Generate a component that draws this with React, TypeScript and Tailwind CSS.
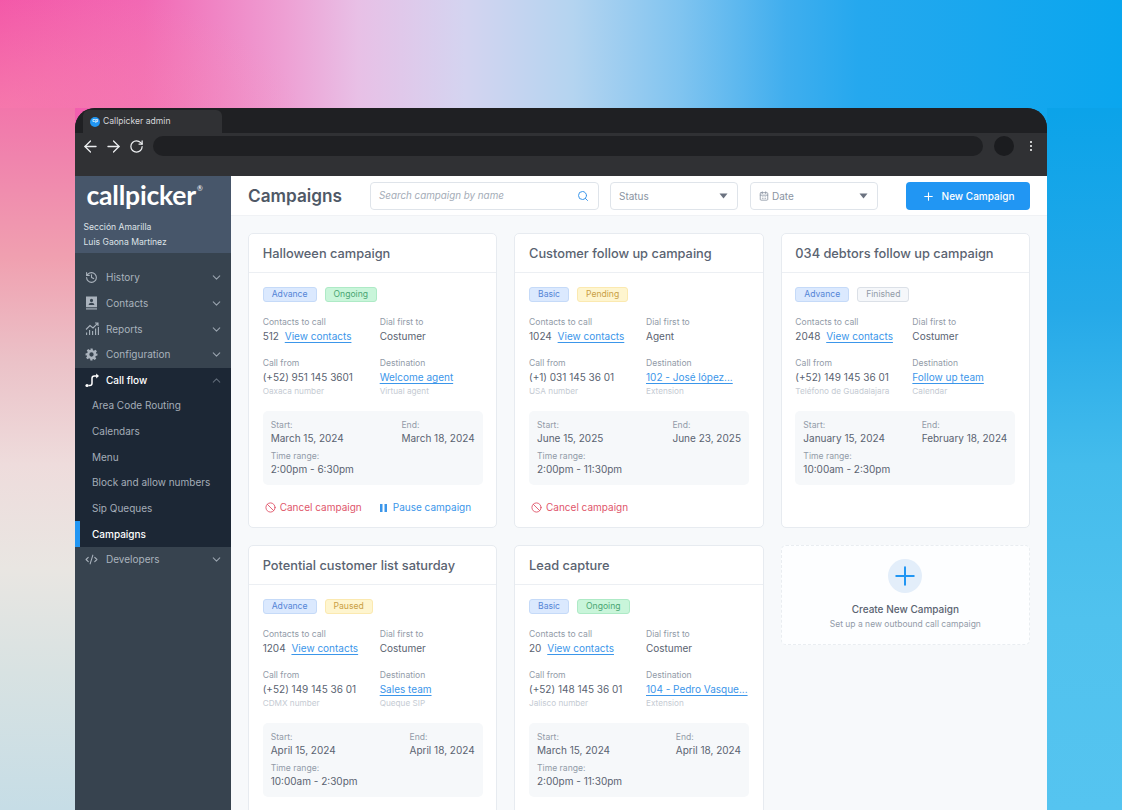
import React from "react";
import { ArrowLeft, ArrowRight, RotateCw, ChevronDown, ChevronUp, History, CodeXml, Search, Plus, Ban, CalendarDays } from "lucide-react";

const ContactsIcon = () => (
  <svg width="13" height="14" viewBox="0 0 13 14" fill="currentColor"><path fillRule="evenodd" d="M1 .5h11v10.800H1zM6.500 2.800a1.600 1.600 0 1 0 0 3.200 1.600 1.600 0 0 0 0-3.200M3.600 9h5.800c-.2-1.400-1.400-2.200-2.900-2.200S3.800 7.600 3.600 9" /><path d="M1 12.300h11v1.200H1z" /></svg>
);
const ReportsIcon = () => (
  <svg width="15" height="14" viewBox="0 0 15 14" fill="none" stroke="currentColor" strokeWidth="1.1"><path d="M1 7.500 5 3.600l3 2.400 4.600-4.600M10 1h3v3M1.600 13v-2.600M4.600 13V8M7.600 13V9M10.600 13V6.600M13.400 13V5" /></svg>
);
const GearIcon = () => (
  <svg width="13" height="13" viewBox="0 0 24 24" fill="currentColor"><path fillRule="evenodd" d="M10 1h4l.6 3.200 1.900.8 2.700-1.800 2.800 2.800-1.800 2.700.8 1.900L23 10v4l-3.200.6-.8 1.900 1.800 2.700-2.800 2.800-2.700-1.800-1.900.8L14 23h-4l-.6-3.200-1.900-.8-2.700 1.800-2.800-2.800 1.800-2.700-.8-1.900L1 14v-4l3.200-.6.8-1.900L3.200 4.800 6 2l2.700 1.800 1.900-.8zM12 8a4 4 0 1 0 0 8 4 4 0 0 0 0-8" /></svg>
);
const FlowIcon = () => (
  <svg width="15" height="15" viewBox="0 0 15 15" fill="none" stroke="currentColor" strokeWidth="1.500"><path d="M3.500 12.500h1.200c1.600 0 2.300-.9 2.300-2.300V5.300C7 3.800 7.800 3 9.300 3H12" /><path d="M11.200.6 14 3l-2.800 2.400z" fill="currentColor" stroke="none" /><circle cx="2" cy="12.500" r="1.600" fill="currentColor" stroke="none" /></svg>
);

const NavItem = ({ icon, label, open }: { icon: React.ReactNode; label: string; open?: boolean }) => (
  <div className={`flex h-[25.64px] items-center pl-[10px] pr-[8px] ${open ? "font-medium text-white" : "text-[#aab3bd]"}`}>
    <span className="flex w-[21px] shrink-0 items-center">{icon}</span>
    <span className="flex-1 text-[10px]">{label}</span>
    {open ? <ChevronUp size={13} className="text-[#5f6a78]" /> : <ChevronDown size={13} className="text-[#98a2ad]" />}
  </div>
);

const SubItem = ({ label, active }: { label: string; active?: boolean }) => (
  <div className={`flex h-[25.64px] items-center text-[10px] ${active ? "border-l-[5px] border-[#2196f3] pl-[12px] font-medium text-white" : "pl-[17px] text-[#a4adb8]"}`}>{label}</div>
);

const badgeStyles: Record<string, string> = {
  Advance: "bg-[#dbe9fe] border-[#c5daf8] text-[#5585d6]",
  Basic: "bg-[#dbe9fe] border-[#c5daf8] text-[#5585d6]",
  Ongoing: "bg-[#c9f5da] border-[#aeeac6] text-[#4aa572]",
  Pending: "bg-[#fef5cf] border-[#fbe9b0] text-[#c9a045]",
  Paused: "bg-[#fef5cf] border-[#fbe9b0] text-[#c9a045]",
  Finished: "bg-[#f5f7fa] border-[#dbe0e7] text-[#929ba8]",
};

const Badge = ({ label }: { label: string }) => (
  <span className={`flex h-[15px] items-center rounded-[3px] border px-[8px] text-[8.6px] ${badgeStyles[label]}`}>{label}</span>
);

type C = {
  title: string; level: string; status: string; contacts: string; dial: string; from: string; fromNote: string;
  dest: string; destNote: string; start: string; end: string; range: string; cancel?: boolean; pause?: boolean;
};

const labelCls = "text-[8.6px] leading-[14px] text-[#929ba8]";
const valueCls = "text-[10px] leading-[14px] text-[#5a6371]";

const Card = ({ c }: { c: C }) => (
  <div className="flex h-[295px] flex-col rounded-[5px] border border-[#e7ebf0] bg-white">
    <div className="flex h-[39px] shrink-0 items-center border-b border-[#eceff3] px-[13.7px] pt-[1px] text-[12.8px] font-medium text-[#5a6371]">{c.title}</div>
    <div className="flex flex-1 flex-col px-[13.7px] pt-[14px]">
      <div className="flex gap-[8px]"><Badge label={c.level} /><Badge label={c.status} /></div>
      <div className="mt-[13px] grid grid-cols-[117px_1fr]">
        <div>
          <div className={labelCls}>Contacts to call</div>
          <div className={valueCls}>{c.contacts} <span className="ml-[3px] text-[#3b96ea] underline underline-offset-2">View contacts</span></div>
        </div>
        <div>
          <div className={labelCls}>Dial first to</div>
          <div className={valueCls}>{c.dial}</div>
        </div>
      </div>
      <div className="mt-[13px] grid grid-cols-[117px_1fr]">
        <div>
          <div className={labelCls}>Call from</div>
          <div className={valueCls}>{c.from}</div>
          <div className="text-[8.2px] leading-[14px] text-[#c5cbd3]">{c.fromNote}</div>
        </div>
        <div className="min-w-0">
          <div className={labelCls}>Destination</div>
          <div className="whitespace-nowrap text-[10px] leading-[14px] text-[#3b96ea] underline underline-offset-2">{c.dest}</div>
          <div className="text-[8.2px] leading-[14px] text-[#c5cbd3]">{c.destNote}</div>
        </div>
      </div>
      <div className="mt-[13px] flex h-[74px] shrink-0 justify-between rounded-[5px] bg-[#f6f8fa] px-[8px] pt-[8px]">
        <div>
          <div className="text-[8.6px] leading-[13px] text-[#929ba8]">Start:</div>
          <div className="text-[10px] leading-[13px] text-[#5a6371]">{c.start}</div>
          <div className="mt-[5px] text-[8.6px] leading-[13px] text-[#929ba8]">Time range:</div>
          <div className="text-[10px] leading-[13px] text-[#5a6371]">{c.range}</div>
        </div>
        <div>
          <div className="text-[8.6px] leading-[13px] text-[#929ba8]">End:</div>
          <div className="text-[10px] leading-[13px] text-[#5a6371]">{c.end}</div>
        </div>
      </div>
      <div className="mt-[15px] flex items-center gap-[18px] pl-[2px] text-[10px]">
        {c.cancel && <span className="flex items-center gap-[4px] text-[#e0566b]"><Ban size={11} />Cancel campaign</span>}
        {c.pause && (
          <span className="flex items-center gap-[6px] text-[#3b96ea]">
            <svg width="7" height="8" viewBox="0 0 7 8" fill="currentColor"><rect width="2.500" height="8" /><rect x="4.500" width="2.500" height="8" /></svg>
            Pause campaign
          </span>
        )}
      </div>
    </div>
  </div>
);

const cards: C[] = [
  { title: "Halloween campaign", level: "Advance", status: "Ongoing", contacts: "512", dial: "Costumer", from: "(+52) 951 145 3601", fromNote: "Oaxaca number", dest: "Welcome agent", destNote: "Virtual agent", start: "March 15, 2024", end: "March 18, 2024", range: "2:00pm - 6:30pm", cancel: true, pause: true },
  { title: "Customer follow up campaing", level: "Basic", status: "Pending", contacts: "1024", dial: "Agent", from: "(+1) 031 145 36 01", fromNote: "USA number", dest: "102 - José lópez...", destNote: "Extension", start: "June 15, 2025", end: "June 23, 2025", range: "2:00pm - 11:30pm", cancel: true },
  { title: "034 debtors follow up campaign", level: "Advance", status: "Finished", contacts: "2048", dial: "Costumer", from: "(+52) 149 145 36 01", fromNote: "Teléfono de Guadalajara", dest: "Follow up team", destNote: "Calendar", start: "January 15, 2024", end: "February 18, 2024", range: "10:00am - 2:30pm" },
  { title: "Potential customer list saturday", level: "Advance", status: "Paused", contacts: "1204", dial: "Costumer", from: "(+52) 149 145 36 01", fromNote: "CDMX number", dest: "Sales team", destNote: "Queque SIP", start: "April 15, 2024", end: "April 18, 2024", range: "10:00am - 2:30pm" },
  { title: "Lead capture", level: "Basic", status: "Ongoing", contacts: "20", dial: "Costumer", from: "(+52) 148 145 36 01", fromNote: "Jalisco number", dest: "104 - Pedro Vasque...", destNote: "Extension", start: "March 15, 2024", end: "April 18, 2024", range: "2:00pm - 11:30pm" },
];

const Caret = () => <svg width="9" height="6" viewBox="0 0 9 6" fill="#6b7280"><path d="M0.500 0.500h8L4.500 5.500z" /></svg>;

export default function App() {
  return (
    <div className="h-[810px] w-[1122px] overflow-hidden px-[75px] pt-[108px] font-['Inter',sans-serif] [background:radial-gradient(ellipse_300px_130px_at_0px_110px,rgba(248,150,175,0.55)_0%,rgba(248,150,175,0)_100%)_0_0/100%_108px_no-repeat,linear-gradient(180deg,#f276ab_0px,#f083ad_47px,#f0a0b0_150px,#ebc2c8_254px,#eedcdc_357px,#e9e6e2_460px,#d8e2e2_564px,#c6dde6_702px)_0_108px/75px_702px_no-repeat,linear-gradient(180deg,#0ba3e9_0px,#25a9e8_202px,#44bcec_357px,#50c2ee_512px,#55c4f0_702px)_1047px_108px/75px_702px_no-repeat,linear-gradient(90deg,#f353a8_0px,#f268b4_143px,#eea0d4_286px,#e8c0e6_358px,#d4d4f0_465px,#b4d4f0_573px,#80c4f0_680px,#40aeee_786px,#25a8ee_858px,#0aa6ee_1122px)]">
      <div className="flex h-[702px] flex-col overflow-hidden rounded-t-[20px] bg-[#303134]">
        <div className="flex h-[25px] shrink-0 items-end bg-[#1f2023] pl-[8px]">
          <div className="flex h-[23px] w-[139px] items-center gap-[3px] rounded-t-[6px] bg-[#303134] pl-[7px] text-[8.6px] text-[#d5d7da]">
            <span className="flex h-[10px] w-[10px] items-center justify-center rounded-full bg-[#2196f3] text-[4.5px] font-bold text-white">cp</span>
            Callpicker admin
          </div>
        </div>
        <div className="flex h-[43px] shrink-0 items-start pl-[6px] pr-[15px] pt-[3px]">
          <div className="flex h-[20px] items-center gap-[2.500px] text-[#eceef0]">
            <ArrowLeft size={19} strokeWidth={1.6} />
            <ArrowRight size={19} strokeWidth={1.6} className="ml-[1px]" />
            <span className="ml-[1px] flex w-[20px] justify-center"><RotateCw size={15} strokeWidth={2} /></span>
          </div>
          <div className="ml-[7px] h-[20px] flex-1 rounded-full bg-[#1f2023]" />
          <div className="ml-[11px] h-[20px] w-[20px] rounded-full bg-[#1b1c1f]" />
          <div className="ml-[15px] flex h-[20px] w-[3px] flex-col items-center justify-center gap-[2px]">
            <i className="h-[2px] w-[2px] rounded-full bg-white" /><i className="h-[2px] w-[2px] rounded-full bg-white" /><i className="h-[2px] w-[2px] rounded-full bg-white" />
          </div>
        </div>
        <div className="flex min-h-0 flex-1">
          <aside className="flex w-[156px] shrink-0 flex-col bg-[#37434f]">
            <div className="h-[77px] shrink-0 bg-[#47566a] pl-[8.500px] pt-[3px] text-[#dfe3e8]">
              <div className="flex h-[36px] items-start pl-[3px] font-['Lato',sans-serif] text-[26.500px] font-bold leading-[32px] tracking-[-0.2px] text-white">
                callpicker<span className="ml-[1px] mt-[-7px] text-[7px] font-normal">®</span>
              </div>
              <div className="mt-[5px] text-[8.600px] leading-[14.500px]">Sección Amarilla</div>
              <div className="text-[8.600px] leading-[14.500px]">Luis Gaona Martínez</div>
            </div>
            <div className="pt-[12px]">
              <NavItem icon={<History size={13} />} label="History" />
              <NavItem icon={<ContactsIcon />} label="Contacts" />
              <NavItem icon={<ReportsIcon />} label="Reports" />
              <NavItem icon={<GearIcon />} label="Configuration" />
              <div className="bg-[#1c2735]">
                <NavItem icon={<FlowIcon />} label="Call flow" open />
                <SubItem label="Area Code Routing" />
                <SubItem label="Calendars" />
                <SubItem label="Menu" />
                <SubItem label="Block and allow numbers" />
                <SubItem label="Sip Queques" />
                <SubItem label="Campaigns" active />
              </div>
              <NavItem icon={<CodeXml size={13} />} label="Developers" />
            </div>
          </aside>
          <main className="min-w-0 flex-1 bg-[#f7f9fb]">
            <header className="flex h-[40px] items-center border-b border-[#f0f2f5] bg-white pl-[17px] pr-[17px] pt-[1px]">
              <h1 className="w-[122px] shrink-0 text-[17.200px] font-semibold text-[#4f5866]">Campaigns</h1>
              <div className="flex h-[28px] w-[229px] items-center justify-between rounded-[4px] border border-[#dfe4ea] pl-[8px] pr-[9px] text-[9.800px] leading-[26px] italic text-[#a4acb7]">
                <span>Search campaign by name</span>
                <Search size={12} className="text-[#3b96ea]" />
              </div>
              <div className="ml-[11px] flex h-[28px] w-[128px] items-center justify-between rounded-[4px] border border-[#dfe4ea] pl-[8px] pr-[9px] text-[10px] text-[#8a94a2]">
                Status<Caret />
              </div>
              <div className="ml-[12px] flex h-[28px] w-[128px] items-center rounded-[4px] border border-[#dfe4ea] pl-[8px] pr-[9px] text-[10px] text-[#8a94a2]">
                <CalendarDays size={10} className="mr-[3px]" />Date<span className="ml-auto"><Caret /></span>
              </div>
              <div className="ml-[28px] flex h-[28px] w-[124px] items-center justify-center gap-[7px] rounded-[4px] bg-[#2196f3] text-[10px] font-medium text-white">
                <Plus size={13} />New Campaign
              </div>
            </header>
            <div className="grid grid-cols-3 gap-[17px] px-[17px] pt-[17px]">
              {cards.map((c) => <Card key={c.title} c={c} />)}
              <div className="flex h-[100px] flex-col items-center rounded-[5px] border border-dashed border-[#e9edf1] bg-[#fdfeff] pt-[13px]">
                <div className="flex h-[34px] w-[34px] items-center justify-center rounded-full bg-[#e3eefa] text-[#2196f3]"><Plus size={30} strokeWidth={1.6} /></div>
                <div className="mt-[9px] text-[10px] font-medium leading-[14px] text-[#5a6371]">Create New Campaign</div>
                <div className="mt-[1px] text-[8.500px] leading-[14px] text-[#929ba8]">Set up a new outbound call campaign</div>
              </div>
            </div>
          </main>
        </div>
      </div>
    </div>
  );
}
